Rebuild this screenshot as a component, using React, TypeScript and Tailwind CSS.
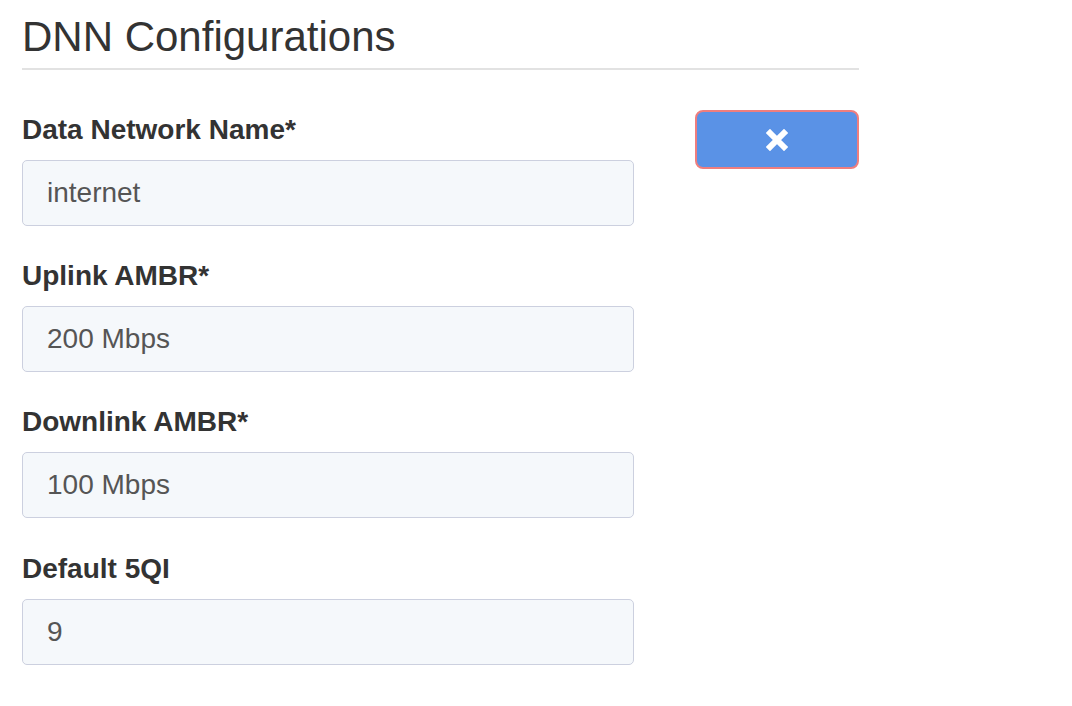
const FIELDS = [
  { label: "Data Network Name*", value: "internet" },
  { label: "Uplink AMBR*", value: "200 Mbps" },
  { label: "Downlink AMBR*", value: "100 Mbps" },
  { label: "Default 5QI", value: "9" },
];

function TimesIcon() {
  return (
    <svg width="22" height="22" viewBox="0 0 22 22" fill="none">
      <path
        d="M4 4L18 18M18 4L4 18"
        stroke="white"
        strokeWidth="6"
        strokeLinecap="square"
      />
    </svg>
  );
}

export default function App() {
  return (
    <div
      className="min-h-[706px] w-[1072px] bg-white pl-[22px] text-[#333]"
      style={{ fontFamily: '"Liberation Sans", Arial, sans-serif' }}
    >
      <div className="w-[837px]">
        {/* Header */}
        <div className="border-b-2 border-[#e2e2e2] pb-[8px] pt-[14px]">
          <h3 className="text-[42px] font-normal leading-[46px]">DNN Configurations</h3>
        </div>

        <div className="flex pt-[40px]">
          {/* Form */}
          <div className="flex w-[612px] shrink-0 flex-col gap-[30px]">
            {FIELDS.map((f, i) => (
              <div key={f.label} className={`flex flex-col ${i === 3 ? "mt-[1px]" : ""}`}>
                <label className="text-[28px] font-bold leading-[40px]">{f.label}</label>
                <input
                  readOnly
                  value={f.value}
                  className="mt-[10px] h-[66px] w-full rounded-[5px] border border-[#ccd0df] bg-[#f5f8fb] px-[24px] text-[28px] text-[#555] outline-none"
                  style={{ fontFamily: '"Liberation Sans", Arial, sans-serif' }}
                />
              </div>
            ))}
          </div>

          {/* Remove button */}
          <div className="ml-[61px] shrink-0">
            <button className="flex h-[59px] w-[164px] items-center justify-center rounded-[8px] border-2 border-[#ef7e7e] bg-[#5a92e6]">
              <TimesIcon />
            </button>
          </div>
        </div>
      </div>
    </div>
  );
}
